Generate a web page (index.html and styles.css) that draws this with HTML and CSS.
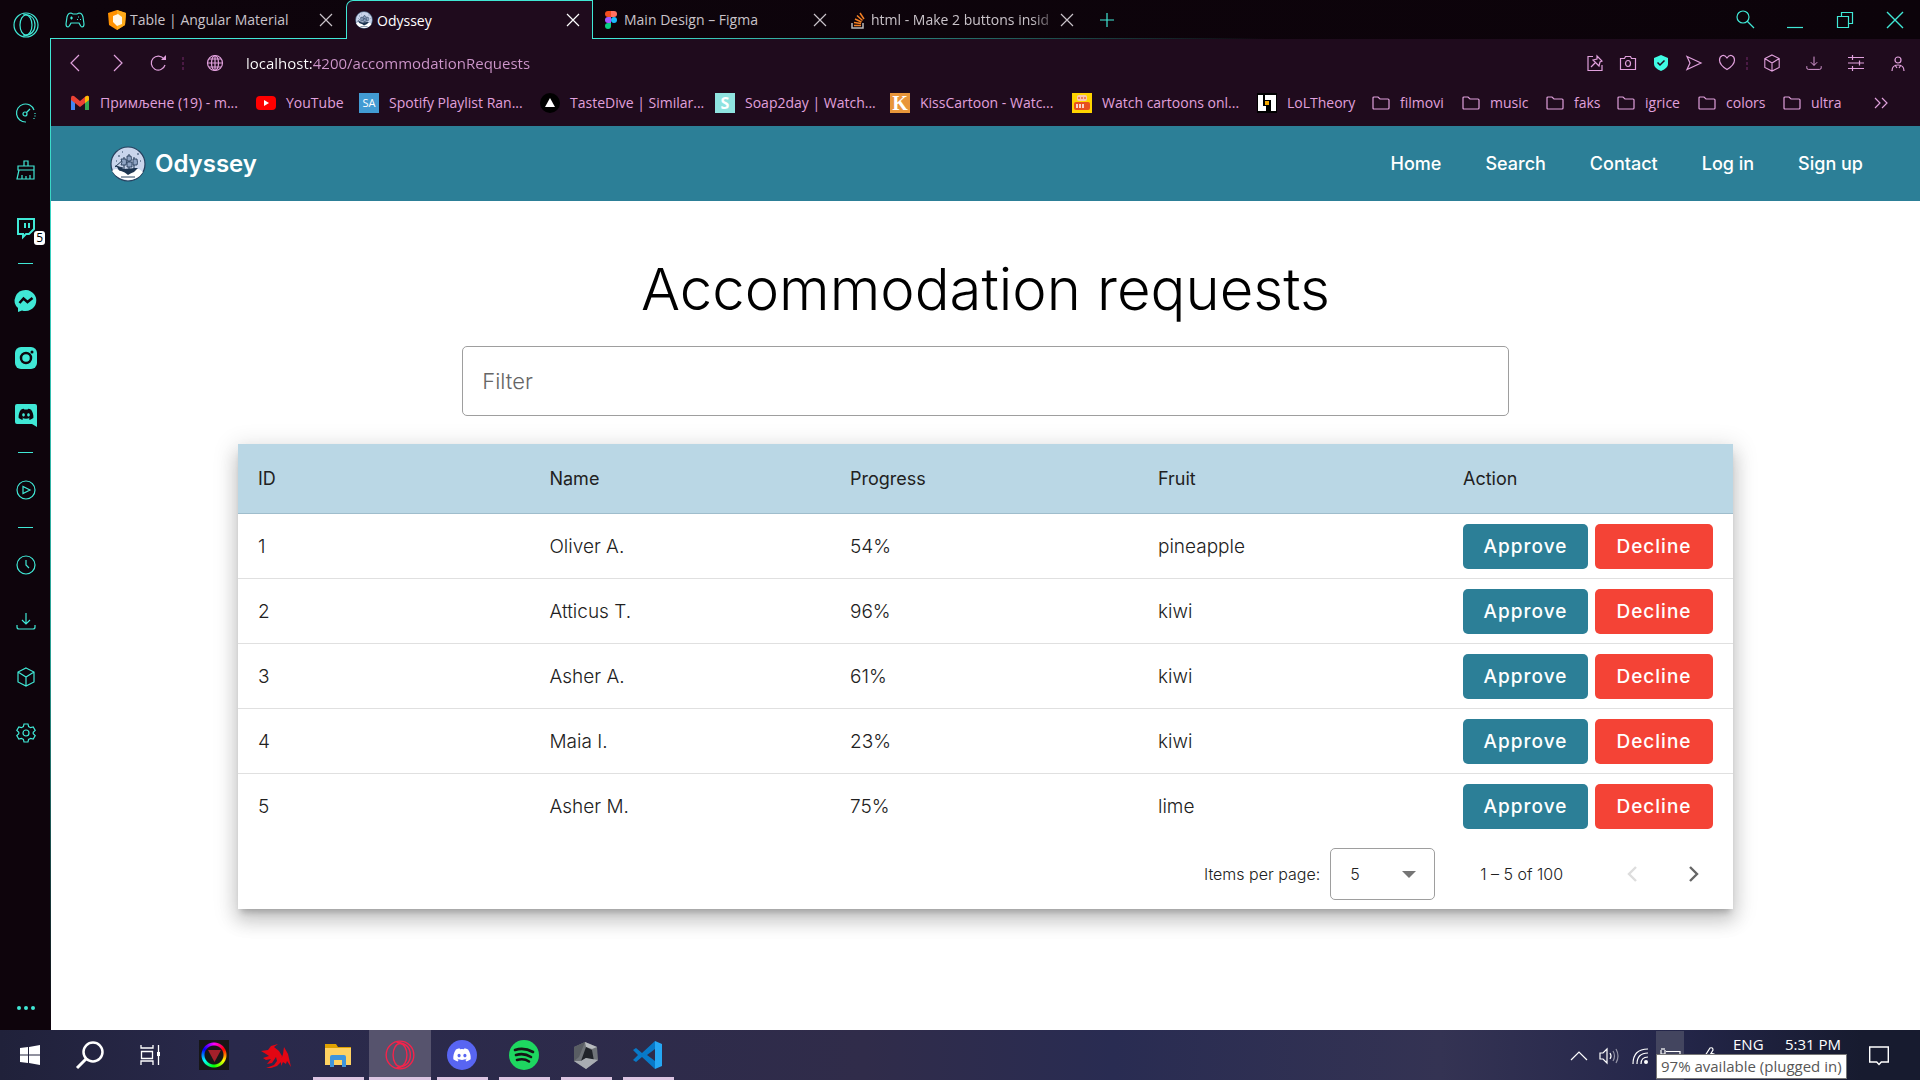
FILE: index.html
```html
<!DOCTYPE html>
<html lang="en">
<head>
<meta charset="utf-8">
<meta name="viewport" content="width=device-width, initial-scale=1">
<title>Odyssey</title>
<link rel="stylesheet" href="styles.css">
</head>
<body>
<svg class="defs" aria-hidden="true">
  <symbol id="close" viewBox="0 0 14 14"><path d="M1 1l12 12M13 1L1 13"/></symbol>
  <symbol id="folder" viewBox="0 0 18 14"><path d="M1 12V2q0-1 1-1h4l2 2h8q1 0 1 1v8q0 1-1 1H2q-1 0-1-1z"/></symbol>
  <symbol id="cube" viewBox="0 0 20 20"><path d="M10 1l8 4v10l-8 4-8-4V5zM2 5l8 5 8-5M10 10v9"/></symbol>
  <symbol id="download" viewBox="0 0 20 20"><path d="M10 2v11M6 9l4 4 4-4M1 14v2q0 2 2 2h14q2 0 2-2v-2"/></symbol>
  <symbol id="ship" viewBox="0 0 36 36">
    <circle cx="18" cy="18" r="17" fill="#c9d5ec" stroke="#26415f" stroke-width="1.2"/>
    <path d="M2 25q4-4 8 0 4-2 8 0 2-4 7-2 4-1 8 3-5 8-15 8-11-1-16-9z" fill="#fff" stroke="none"/>
    <path d="M7 20l7 3 11-1 3 0-4 4q-3 1-6 3-3-3-7-4-3 0-4-5z" fill="#1d3450" stroke="none"/>
    <path d="M14 23V11M19 23V8M24 23V11M5 21l9-8M5 20l8 2" fill="none" stroke="#1d3450" stroke-width="1"/>
    <path d="M11 13h5q1 3 0 6h-5q2-3 0-6zM17 10h4q1 3 0 5h-4zM17 16h5v5h-5zM23 13h4q1 4 0 6h-4z" fill="#8fa3c2" stroke="#1d3450" stroke-width=".8"/>
    <path d="M8 10h2M27 8h2M6 15h1M30 15h1M12 6h1M11 31h14" fill="none" stroke="#26415f" stroke-width="1"/>
  </symbol>
  <symbol id="opera" viewBox="0 0 26 26"><ellipse cx="13" cy="13" rx="12" ry="12"/><ellipse cx="13" cy="13" rx="6" ry="10"/><path d="M10 2q12 1 12 11T10 24"/></symbol>
  <symbol id="discord" viewBox="0 0 24 24"><path d="M19.3 5.3A17 17 0 0 0 15 4l-.6 1.1a15 15 0 0 0-4.8 0L9 4a17 17 0 0 0-4.300 1.300C2 9.300 1.300 13.200 1.600 17a17 17 0 0 0 5.200 2.700l1.200-1.900-1.800-.9.400-.3a12 12 0 0 0 10.800 0l.4.300-1.800.9 1.200 1.900a17 17 0 0 0 5.200-2.700c.4-4.400-.7-8.200-3.100-11.700zM8.500 14.800c-1 0-1.900-1-1.900-2.200s.8-2.200 1.900-2.200 1.900 1 1.900 2.200-.8 2.200-1.900 2.200zm7 0c-1 0-1.900-1-1.900-2.200s.8-2.200 1.900-2.200 1.900 1 1.900 2.200-.8 2.200-1.900 2.200z"/></symbol>
</svg>

<div class="window">
  <aside class="sidebar">
    <button class="side-logo" aria-label="Opera menu"><svg class="i26"><use href="#opera"/></svg></button>
    <div class="side-group">
      <button class="side-item" aria-label="GX Control"><svg class="i20" viewBox="0 0 20 20"><path d="M10 19A9 9 0 1 1 18 7M19 10v1M19 12.500v1M18 15v1"/><circle cx="9" cy="11" r="2"/><path d="M10.500 9.500L14 6"/></svg></button>
      <button class="side-item" aria-label="GX Cleaner"><svg class="i20" viewBox="0 0 20 20"><path d="M8 6V1h4v5M2 10V6h16v4zM3 10L1 19h17V10M6 19v-4M10 19v-3M14 19v-4"/></svg></button>
      <button class="side-item" aria-label="Twitch"><svg class="i20" viewBox="0 0 20 20"><path d="M2 2h16v10l-5 5h-3l-3 3v-3H2z" stroke-width="2"/><path d="M9 6v5M13 6v5" stroke-width="2"/></svg><span class="badge">5</span></button>
    </div>
    <hr class="side-sep">
    <div class="side-group">
      <button class="side-item" aria-label="Messenger"><svg class="i24" viewBox="0 0 24 24"><path class="solid" d="M12 1a11 10.500 0 1 1-4 20.500L4 23v-4A11 10.500 0 0 1 12 1z"/><path class="cut" d="M5.500 14l4-4.500 4 3.500 5-4"/></svg></button>
      <button class="side-item" aria-label="Instagram"><svg class="i24" viewBox="0 0 24 24"><rect class="solid" x="1" y="1" width="22" height="22" rx="6"/><circle class="cut" cx="12" cy="12" r="5"/><circle class="dark" cx="18" cy="6" r="1.500"/></svg></button>
      <button class="side-item" aria-label="Discord"><svg class="i24" viewBox="0 0 24 24"><path class="solid" d="M3 1h18q2 0 2 2v21l-5-3H3q-2 0-2-2V3q0-2 2-2z"/><svg class="dark" x="3" y="3" width="18" height="17"><use href="#discord"/></svg></svg></button>
    </div>
    <hr class="side-sep wide">
    <button class="side-item tight" aria-label="Player"><svg class="i20" viewBox="0 0 20 20"><circle cx="10" cy="10" r="9"/><path d="M7 6.500v7l7-3.500z"/></svg></button>
    <hr class="side-sep wide">
    <div class="side-group">
      <button class="side-item tight" aria-label="History"><svg class="i20" viewBox="0 0 20 20"><circle cx="10" cy="10" r="9"/><path d="M10 5v5l3 3"/></svg></button>
      <button class="side-item tight" aria-label="Downloads"><svg class="i20"><use href="#download"/></svg></button>
      <button class="side-item tight" aria-label="Extensions"><svg class="i20"><use href="#cube"/></svg></button>
      <button class="side-item tight" aria-label="Settings"><svg class="i20" viewBox="0 0 20 20"><circle cx="10" cy="10" r="3"/><path d="M8 1h4l.6 2.600 2 1.100L17.200 4l2 3.400-2 1.900v1.400l2 1.900-2 3.400-2.600-.7-2 1.100L12 19H8l-.6-2.600-2-1.100-2.600.7-2-3.400 2-1.900V9.300l-2-1.900L2.800 4l2.600.7 2-1.100z"/></svg></button>
    </div>
    <button class="side-more" aria-label="More"><svg class="i20" viewBox="0 0 20 20"><g class="solid"><circle cx="3" cy="10" r="2"/><circle cx="10" cy="10" r="2"/><circle cx="17" cy="10" r="2"/></g></svg></button>
  </aside>

  <div class="browser">
    <div class="tabbar">
      <button class="corner" aria-label="GX Corner"><svg class="i20" viewBox="0 0 20 20"><path d="M6 3q-3 0-4 4L1 14q0 3 2 3 1 0 3-4h8q2 4 3 4 2 0 2-3l-1-7q-1-4-4-4l-2 1H8z"/><path d="M5 8h3M6.500 6.500v3M13 7h1M12 9.500h1M15 9.500h1"/></svg></button>
      <div class="tab">
        <svg class="fav" viewBox="0 0 18 20"><path d="M9 0l9 3-1 12-8 5-8-5L0 3z" fill="#ff9100"/><path d="M9 0l9 3-1 12-8 5z" fill="#ffab1a"/><path d="M5 6l5-2 4 3v7l-5 2-4-4z" fill="#fff7e8"/></svg>
        <span class="tab-title">Table | Angular Material</span>
        <button class="tab-close" aria-label="Close tab"><svg class="i14"><use href="#close"/></svg></button>
      </div>
      <div class="tab active">
        <svg class="fav"><use href="#ship"/></svg>
        <span class="tab-title">Odyssey</span>
        <button class="tab-close" aria-label="Close tab"><svg class="i14"><use href="#close"/></svg></button>
      </div>
      <div class="tab">
        <svg class="fav" viewBox="0 0 18 20"><path d="M9 1H6a3 3 0 0 0 0 6h3z" fill="#f24e1e"/><path d="M9 1h3a3 3 0 0 1 0 6H9z" fill="#ff7262"/><path d="M9 7H6a3 3 0 0 0 0 6h3z" fill="#a259ff"/><circle cx="12" cy="10" r="3" fill="#1abcfe"/><path d="M9 13H6a3 3 0 1 0 3 3z" fill="#0acf83"/></svg>
        <span class="tab-title">Main Design – Figma</span>
        <button class="tab-close" aria-label="Close tab"><svg class="i14"><use href="#close"/></svg></button>
      </div>
      <div class="tab">
        <svg class="fav" viewBox="0 0 18 20"><path d="M3 13v5h11v-5" fill="none" stroke="#bcbbbb" stroke-width="1.500"/><path d="M5 15.500h7M5 12.500l7 1M6 9l6.500 3M8 5.500l5.500 5M11 3l4 6" stroke="#f48024" stroke-width="1.500"/></svg>
        <span class="tab-title fade">html - Make 2 buttons insid</span>
        <button class="tab-close" aria-label="Close tab"><svg class="i14"><use href="#close"/></svg></button>
      </div>
      <button class="new-tab" aria-label="New tab"><svg class="i16" viewBox="0 0 16 16"><path d="M8 1v14M1 8h14"/></svg></button>
      <div class="controls">
        <button aria-label="Search tabs"><svg class="i20" viewBox="0 0 20 20"><circle cx="8" cy="7" r="6"/><path d="M12 11l7 7"/></svg></button>
        <button aria-label="Minimize"><svg class="i16" viewBox="0 0 16 16"><path d="M0 15.500h16"/></svg></button>
        <button aria-label="Restore"><svg class="i16" viewBox="0 0 16 16"><path d="M.5 4.500h11v11H.5zM4.500 4.500v-4h11v11h-4"/></svg></button>
        <button aria-label="Close window"><svg class="i16" viewBox="0 0 14 14"><path d="M0 0l14 14M14 0L0 14"/></svg></button>
      </div>
    </div>

    <div class="addressbar">
      <div class="nav-buttons">
        <button aria-label="Back"><svg class="i16" viewBox="0 0 16 16"><path d="M11 0L3 8l8 8"/></svg></button>
        <button aria-label="Forward"><svg class="i16" viewBox="0 0 16 16"><path d="M5 0l8 8-8 8"/></svg></button>
        <button aria-label="Reload"><svg class="i16" viewBox="0 0 16 16"><path d="M15 10a7 7 0 1 1-1-6"/><path class="solid" d="M11 5h5V0z"/></svg></button>
      </div>
      <span class="grip"></span>
      <button class="site" aria-label="Site information"><svg class="i16" viewBox="0 0 16 16"><circle cx="8" cy="8" r="7.500"/><ellipse cx="8" cy="8" rx="3.500" ry="7.500"/><path d="M8 0v16M0 8h16M2 4h12M2 12h12"/></svg></button>
      <input class="url" type="text" aria-label="Address" value="localhost:4200/accommodationRequests">
      <div class="page-tools">
        <button aria-label="Pin page"><svg class="i16" viewBox="0 0 16 16"><path d="M6 1.500H1v14h14V10M10 1l5 5-2 1-1 4-6-6 4-1zM8 8l-4 4"/></svg></button>
        <button aria-label="Snapshot"><svg class="i16" viewBox="0 0 16 16"><path d="M.5 3.500h4l1-2h5l1 2h4v11H.5z"/><ellipse cx="8" cy="8.500" rx="2.500" ry="3"/></svg></button>
        <button aria-label="Ad blocker"><svg class="i16" viewBox="0 0 16 16"><path d="M8 0l7 3v6q0 4-7 7-7-3-7-7V3z" fill="#40fbe4"/><path d="M4.500 7.500L7 10l4.500-4.500" stroke="#1f0b1d" stroke-width="1.500"/></svg></button>
        <button aria-label="Flow"><svg class="i16" viewBox="0 0 16 16"><path d="M1 1.500L15 8 1 14.500 4 8z"/></svg></button>
        <button aria-label="Bookmark"><svg class="i16" viewBox="0 0 16 16"><path d="M8 3Q6 0 3.500 .5 .5 1.500.5 5q0 5 7.500 9.500Q15.500 10 15.500 5q0-3.500-3-4.500Q10 0 8 3z"/></svg></button>
      </div>
      <span class="grip"></span>
      <div class="browser-tools">
        <button aria-label="Extensions"><svg class="i18"><use href="#cube"/></svg></button>
        <button aria-label="Downloads"><svg class="i16"><use href="#download"/></svg></button>
        <button aria-label="Easy setup"><svg class="i16" viewBox="0 0 16 16"><path d="M0 2.500h16M0 8h16M0 13.500h16M4.500 0v5M11.500 5.500v5M4.500 11v5"/></svg></button>
        <button aria-label="Profile"><svg class="i16" viewBox="0 0 16 16"><circle cx="8" cy="5" r="3"/><path d="M2 16q0-6 6-6t6 6M5 10l2 3M11 10l-2 3"/></svg></button>
      </div>
    </div>

    <nav class="bookmarks" aria-label="Bookmarks">
      <a href="#"><svg class="bm" viewBox="0 0 20 20"><path d="M1 17V5l4 3v9z" fill="#4285f4"/><path d="M19 17V5l-4 3v9z" fill="#34a853"/><path d="M1 5q0-3 3-2l6 5 6-5q3-1 3 2v2l-9 7-9-7z" fill="#ea4335"/><path d="M15 4q4-3 4 1v2l-4 3z" fill="#fbbc04"/></svg>Примљене (19) - m...</a>
      <a href="#"><svg class="bm" viewBox="0 0 20 20"><rect y="3" width="20" height="14" rx="4" fill="#f00"/><path d="M8 7v6l5-3z" fill="#fff"/></svg>YouTube</a>
      <a href="#"><span class="tile blue">SA</span>Spotify Playlist Ran...</a>
      <a href="#"><svg class="bm" viewBox="0 0 20 20"><circle cx="10" cy="10" r="10" fill="#000"/><path d="M5 14l5-9 5 9z" fill="#fff"/></svg>TasteDive | Similar...</a>
      <a href="#"><span class="tile mint">S</span>Soap2day | Watch...</a>
      <a href="#"><span class="tile orange">K</span>KissCartoon - Watc...</a>
      <a href="#"><svg class="bm" viewBox="0 0 20 20"><rect width="20" height="20" fill="#ffd400"/><rect x="5" y="2" width="10" height="6" rx="2" fill="#f6c9b4"/><path d="M7 4v2M10 4v2M13 4v2" stroke="#e8501e"/><rect x="2" y="9" width="16" height="8" rx="2" fill="#e8501e"/><path d="M5 11v4M8 11v4M11 11v4" stroke="#fff" stroke-width="1.500"/></svg>Watch cartoons onl...</a>
      <a href="#"><svg class="bm" viewBox="0 0 20 20"><rect width="20" height="20" fill="#000"/><path d="M1 2h5v11h3v5H1zM8 2h11v16h-5V7H8z" fill="#fff"/><rect x="8" y="8" width="4" height="4" fill="#f5a800"/></svg>LoLTheory</a>
      <a href="#"><svg class="bm-folder"><use href="#folder"/></svg>filmovi</a>
      <a href="#"><svg class="bm-folder"><use href="#folder"/></svg>music</a>
      <a href="#"><svg class="bm-folder"><use href="#folder"/></svg>faks</a>
      <a href="#"><svg class="bm-folder"><use href="#folder"/></svg>igrice</a>
      <a href="#"><svg class="bm-folder"><use href="#folder"/></svg>colors</a>
      <a href="#"><svg class="bm-folder"><use href="#folder"/></svg>ultra</a>
      <button aria-label="More bookmarks"><svg class="i14" viewBox="0 0 14 14"><path d="M1 2l5 5-5 5M8 2l5 5-5 5"/></svg></button>
    </nav>

    <header class="site-header">
      <a class="brand" href="#"><svg class="brand-mark"><use href="#ship"/></svg>Odyssey</a>
      <nav class="site-nav">
        <a href="#">Home</a>
        <a href="#">Search</a>
        <a href="#">Contact</a>
        <a href="#">Log in</a>
        <a href="#">Sign up</a>
      </nav>
    </header>

    <main class="content">
      <h1>Accommodation requests</h1>
      <input class="filter" type="text" placeholder="Filter" aria-label="Filter">
      <section class="card">
        <table>
          <colgroup><col class="c-id"><col class="c-name"><col class="c-progress"><col class="c-fruit"><col class="c-action"></colgroup>
          <thead><tr><th>ID</th><th>Name</th><th>Progress</th><th>Fruit</th><th>Action</th></tr></thead>
          <tbody>
            <tr><td>1</td><td>Oliver A.</td><td>54%</td><td>pineapple</td><td><div class="actions"><button class="btn approve">Approve</button><button class="btn decline">Decline</button></div></td></tr>
            <tr><td>2</td><td>Atticus T.</td><td>96%</td><td>kiwi</td><td><div class="actions"><button class="btn approve">Approve</button><button class="btn decline">Decline</button></div></td></tr>
            <tr><td>3</td><td>Asher A.</td><td>61%</td><td>kiwi</td><td><div class="actions"><button class="btn approve">Approve</button><button class="btn decline">Decline</button></div></td></tr>
            <tr><td>4</td><td>Maia I.</td><td>23%</td><td>kiwi</td><td><div class="actions"><button class="btn approve">Approve</button><button class="btn decline">Decline</button></div></td></tr>
            <tr><td>5</td><td>Asher M.</td><td>75%</td><td>lime</td><td><div class="actions"><button class="btn approve">Approve</button><button class="btn decline">Decline</button></div></td></tr>
          </tbody>
        </table>
        <div class="paginator">
          <label for="page-size">Items per page:</label>
          <div class="select"><select id="page-size"><option>5</option><option>10</option><option>20</option></select></div>
          <span class="range">1 – 5 of 100</span>
          <button class="page" aria-label="Previous page" disabled><svg class="i16" viewBox="0 0 16 16"><path d="M11 1L4 8l7 7"/></svg></button>
          <button class="page" aria-label="Next page"><svg class="i16" viewBox="0 0 16 16"><path d="M5 1l7 7-7 7"/></svg></button>
        </div>
      </section>
    </main>
  </div>
</div>

<footer class="taskbar">
  <div class="system">
    <button aria-label="Start"><svg class="i20" viewBox="0 0 20 20"><path class="solid" d="M0 3l8-1v7.500H0zM9 2l11-2v9.500H9zM0 10.500h8V18l-8-1zM9 10.500h11V20L9 18z"/></svg></button>
    <button aria-label="Search"><svg class="i28" viewBox="0 0 28 28"><circle cx="17" cy="11" r="9.500" stroke-width="2.500"/><path d="M10 18l-9 9" stroke-width="3"/></svg></button>
    <button aria-label="Task view"><svg class="i20" viewBox="0 0 20 20"><path d="M1 0v3h12V0M1 20v-4h12v4M1.500 6.500h11v7h-11zM18.500 0v20" stroke-width="1.300"/><path class="solid" d="M17 7h3v4h-3z"/></svg></button>
  </div>
  <div class="apps">
    <button class="app" aria-label="RGB control"><span class="rgb"><svg viewBox="0 0 12 12"><path d="M0 1h12L6 12z" fill="#a3202a"/></svg></span></button>
    <button class="app" aria-label="Redragon"><svg class="i30" viewBox="0 0 30 30"><path d="M0 11l7-1 3-4 7-2-4 3 5 4 3 5-1 6-4 4-6 2H5l8-3 3-4-1-4-4 6-5 1 4-5-5 1-3-2 6-2-3-2zM20 20l2-6 1-7 4 7 3 13-4-6-1 3-3-2-2 4z" fill="#e30613"/></svg></button>
    <button class="app open" aria-label="File Explorer"><svg class="i28" viewBox="0 0 28 28"><path d="M1 3h11l2 3h13v4H1z" fill="#dfa100"/><path d="M1 7h26v17H1z" fill="#ffd262"/><path d="M6 26V16q0-2 2-2h12q2 0 2 2v10h-4v-7h-8v7z" fill="#3f95dc"/></svg></button>
    <button class="app open current" aria-label="Opera GX"><svg class="i30 red"><use href="#opera"/></svg></button>
    <button class="app open" aria-label="Discord"><span class="round indigo"><svg class="i20"><use href="#discord"/></svg></span></button>
    <button class="app open" aria-label="Spotify"><span class="round green"><svg class="i20" viewBox="0 0 20 20"><path d="M1 5q9-3 18 2M2 10q8-2.500 15 2M3 15q7-2 12 1.500" stroke="#151515" stroke-width="2.600" stroke-linecap="round"/></svg></span></button>
    <button class="app open" aria-label="Hardware suite"><svg class="i28" viewBox="0 0 28 28"><path d="M13 1l12 5 1 13-12 9L2 20V6z" fill="#6f7378"/><path d="M13 1l12 5-5 2-6-2z" fill="#b9bcc0"/><path d="M14 6l6 3 2 11-8-3-5 3z" fill="#202329"/><path d="M2 20l7 0 5-3 12 2-12 9z" fill="#a9adb2"/><path d="M2 6l11-5-6 15-5 4z" fill="#595d63"/></svg></button>
    <button class="app open" aria-label="Visual Studio Code"><svg class="i30" viewBox="0 0 30 30"><path d="M22 1L9 13 3 8 0 10l5 5-5 5 3 2 6-5 13 12V21l-8-6 8-6z" fill="#0879c8"/><path d="M22 1l7 3v22l-7 3z" fill="#25a7f4"/></svg></button>
  </div>
  <div class="tray">
    <button class="t-chevron" aria-label="Show hidden icons"><svg class="i16" viewBox="0 0 16 16"><path d="M0 12l8-8 8 8"/></svg></button>
    <button aria-label="Volume"><svg class="i20" viewBox="0 0 20 20"><path d="M0 7h3l4-4v14l-4-4H0zM10 7q2 3 0 6"/><path opacity=".5" d="M13 5q3 5 0 10M16 3q4 7 0 14"/></svg></button>
    <button aria-label="Network"><svg class="i16" viewBox="0 0 16 16"><path d="M1 16Q1 1 16 1M5 16Q5 5 16 5M9 16q0-7 7-7"/><circle class="solid" cx="14" cy="14" r="2"/></svg></button>
    <button class="hover" aria-label="Battery"><svg class="i20" viewBox="0 0 20 20"><path d="M6 5.500h14v9H4V9M1 4v4h4V4M2 4V2M4 4V2M3 8v4"/><path class="solid" d="M7 8h11v5H7z"/></svg></button>
    <button class="t-pen" aria-label="Ink workspace"><svg class="i16" viewBox="0 0 16 16"><path d="M2 11l7-11q3-1 3 2L6 12zM7 11q3-7 6-5t0 6"/></svg></button>
    <span class="lang">ENG</span>
    <time>5:31 PM</time>
    <button class="notify" aria-label="Notifications"><svg class="i20" viewBox="0 0 20 20"><path d="M.7 1h18.600v15h-7L10 18.500 7.700 16h-7z" stroke-width="1.400"/></svg></button>
    <span class="tooltip" role="tooltip">97% available (plugged in)</span>
  </div>
</footer>
</body>
</html>
```

FILE: styles.css
```css
:root {
  --neon: #40e8d6;
  --pink: #e0a0dc;
  --chrome: #1f0b1d;
  --night: #0e040c;
  --teal: #2c7f97;
  --red: #f44336;
}

* { box-sizing: border-box; }

body {
  margin: 0;
  min-height: 100vh;
  display: flex;
  flex-direction: column;
  background: #fff;
  font-family: "Open Sans", "Noto Sans", sans-serif;
  font-size: 14px;
}

button {
  padding: 0;
  border: 0;
  background: none;
  color: inherit;
  font: inherit;
  display: flex;
  align-items: center;
  justify-content: center;
}

a { color: inherit; text-decoration: none; }

svg { flex: none; fill: none; stroke: currentColor; stroke-width: 1.2; overflow: visible; }
svg [fill]:not([stroke]), .solid { stroke: none; }
.solid { fill: currentColor; }
.cut { stroke: var(--night); stroke-width: 2.5; }
.dark { fill: var(--night); stroke: none; }
.defs { position: absolute; width: 0; height: 0; }

.i14 { width: 14px; height: 14px; }
.i16 { width: 16px; height: 16px; }
.i18 { width: 18px; height: 18px; }
.i20 { width: 20px; height: 20px; }
.i24 { width: 24px; height: 24px; }
.i26 { width: 26px; height: 26px; }
.i28 { width: 28px; height: 28px; }
.i30 { width: 30px; height: 30px; }

.window { flex: 1; display: flex; }

/* Sidebar */
.sidebar {
  width: 51px;
  flex: none;
  display: flex;
  flex-direction: column;
  color: var(--neon);
  background:
    linear-gradient(var(--neon), #2a9d92 60%, transparent 96%) right 38px / 1px 100% no-repeat,
    var(--night);
}
.side-logo { height: 50px; margin-bottom: 34px; }
.side-item { position: relative; width: 100%; height: 57px; }
.side-item.tight { height: 56px; }
.side-sep { width: 15px; height: 1px; margin: 8px auto; border: 0; background: var(--neon); }
.side-sep.wide { margin: 9px auto; }
.side-more { height: 44px; margin-top: auto; }
.badge {
  position: absolute;
  right: 6px;
  bottom: 10px;
  padding: 0 2px;
  border-radius: 3px;
  background: #fff;
  color: #000;
  font-size: 12px;
  line-height: 14px;
}

.browser { flex: 1; min-width: 0; display: flex; flex-direction: column; }

/* Tab strip */
.tabbar {
  height: 39px;
  display: flex;
  color: var(--neon);
  background:
    linear-gradient(90deg, var(--neon) 0 30%, transparent 65%) bottom / 100% 1px no-repeat,
    linear-gradient(90deg, var(--night), #0c030a);
}
.corner { width: 48px; }
.tab {
  width: 247px;
  display: flex;
  align-items: center;
  padding: 0 13px 0 9px;
  color: #c9c3c9;
}
.tab.active {
  padding: 0 12px 0 8px;
  border: 1px solid var(--neon);
  border-bottom: 0;
  border-top-left-radius: 7px;
  background: var(--chrome);
  color: #fff;
}
.fav { width: 18px; height: 20px; margin-right: 4px; }
.tab-title { flex: 1; white-space: nowrap; }
.fade { mask-image: linear-gradient(90deg, #000 85%, transparent); }
.new-tab { width: 40px; }
.controls { margin-left: auto; display: flex; }
.controls button { width: 50px; }

/* Address bar */
.addressbar { height: 48px; display: flex; align-items: center; background: var(--chrome); color: var(--pink); }
.nav-buttons { display: flex; padding-left: 4px; }
.nav-buttons button { width: 41px; }
.grip { width: 2px; height: 13px; margin: 0 4px; background: repeating-linear-gradient(#4a1a44 0 3px, transparent 3px 5px); }
.site { width: 54px; margin-right: 4px; }
.url {
  flex: 1;
  min-width: 0;
  padding: 0;
  border: 0;
  outline: 0;
  font: inherit;
  font-size: 15px;
  color: var(--pink);
  background: linear-gradient(90deg, #fff 67px, #cf97cc 67px);
  background-clip: text;
  -webkit-text-fill-color: transparent;
}
.page-tools { display: flex; }
.page-tools button { width: 33px; }
.page-tools + .grip { margin: 0 3px; }
.browser-tools { display: flex; padding-right: 1px; }
.browser-tools button { width: 42px; }

/* Bookmarks bar */
.bookmarks {
  height: 39px;
  padding: 0 0 8px 19px;
  display: grid;
  grid-template-columns: 186px 103px 181px 175px 175px 182px 185px 115px 90px 84px 71px 81px 85px 80px 36px;
  align-items: center;
  background: var(--chrome);
  color: var(--pink);
}
.bookmarks a { display: flex; align-items: center; gap: 10px; white-space: nowrap; }
.bm { width: 20px; height: 20px; }
.bm-folder { width: 18px; height: 14px; }
.tile { width: 20px; height: 20px; display: grid; place-items: center; color: #fff; font-size: 11px; line-height: 20px; }
.blue { background: #429bd3; }
.mint { background: #8fe3e0; font-size: 16px; font-weight: 700; }
.orange { background: #e8963a; font: 700 20px/20px "Liberation Serif", serif; }

/* Site header */
.site-header {
  min-height: 75px;
  padding: 0 57px 0 59px;
  display: flex;
  align-items: center;
  justify-content: space-between;
  background: var(--teal);
  color: #fff;
  font-family: Inter, sans-serif;
}
.brand { display: flex; align-items: center; gap: 9px; font-size: 24px; font-weight: 600; }
.brand-mark { width: 36px; height: 36px; }
.site-nav { display: flex; gap: 44px; font-size: 18px; font-weight: 500; }

/* Requests page */
.content {
  flex: 1;
  display: flex;
  flex-direction: column;
  align-items: center;
  padding-top: 56px;
  font-family: Inter, sans-serif;
  color: #212121;
}
h1 { margin: 0 0 25px; font-size: 58px; line-height: 64px; font-weight: 300; color: #000; }
.filter {
  width: 56%;
  height: 70px;
  margin-bottom: 28px;
  padding: 0 19px;
  border: 1px solid #9e9e9e;
  border-radius: 5px;
  background: #fff;
  font: 300 22px Inter, sans-serif;
}
.filter::placeholder { color: #666; opacity: 1; }
.card {
  width: 80%;
  background: #fff;
  box-shadow: 0 6px 6px -3px #0003, 0 12px 17px 1px #00000024, 0 5px 22px 4px #0000001f;
}
table { width: 100%; table-layout: fixed; border-collapse: separate; border-spacing: 0; font-size: 19px; }
.c-id { width: 19.5%; }
.c-name { width: 20.1%; }
.c-progress { width: 20.6%; }
.c-fruit { width: 20.4%; }
.c-action { width: 19.4%; }
th, td { padding: 0 0 0 20px; text-align: left; border-bottom: 1px solid #0000001f; }
th { height: 70px; background: #bad7e5; font-size: 18px; font-weight: 400; border-bottom-color: #9fbdcc; }
td { height: 65px; font-weight: 300; }
tbody tr:last-child td { border-bottom: 0; }
.actions { display: flex; gap: 7px; }
.btn { height: 45px; border-radius: 5px; color: #fff; font-size: 19px; font-weight: 500; letter-spacing: 1px; }
.approve { width: 125px; background: var(--teal); }
.decline { width: 118px; background: var(--red); }

.paginator {
  min-height: 70px;
  display: flex;
  align-items: center;
  justify-content: flex-end;
  padding-right: 10px;
  font-size: 16px;
  font-weight: 300;
}
.select { position: relative; margin: 0 45px 0 10px; }
.select::after {
  content: "";
  position: absolute;
  right: 19px;
  top: 23px;
  border: 7px solid transparent;
  border-top-color: #757575;
  border-bottom: 0;
}
select {
  appearance: none;
  width: 105px;
  height: 52px;
  padding: 0 19px;
  border: 1px solid #9e9e9e;
  border-radius: 5px;
  background: #fff;
  color: inherit;
  font: inherit;
}
.range { margin-right: 40px; }
.page { width: 60px; height: 60px; color: #666; }
.page svg { stroke-width: 2.4; }
.page:disabled { color: #ddd; }

/* Taskbar */
.taskbar {
  height: 50px;
  display: flex;
  color: #fff;
  background: linear-gradient(90deg, #20213a, #29294b 12%, #302c4a 45%, #292c52 58%, #343353 75%, #24264a 87%, #171b2f 97%);
}
.system { display: flex; margin-right: 3px; }
.system button { width: 60px; }
.apps { display: flex; }
.app { width: 62px; }
.open { background: linear-gradient(#dcc5e2, #dcc5e2) bottom / 51px 3px no-repeat; }
.current { background: linear-gradient(#dcc5e2, #dcc5e2) bottom / 100% 3px no-repeat, #56536d; }
.red { color: #f5234b; }
.rgb {
  width: 30px;
  height: 30px;
  display: grid;
  place-items: center;
  background:
    radial-gradient(circle, #161616 0 9px, transparent 10px 12px, #161616 13px),
    conic-gradient(#f0f, red, #ff0, lime, cyan, blue, #f0f);
}
.rgb svg { width: 13px; height: 13px; }
.round { width: 30px; height: 30px; border-radius: 50%; display: grid; place-items: center; }
.indigo { background: #5865f2; }
.indigo svg { fill: #fff; stroke: none; }
.green { background: #1ed760; }
.tray { position: relative; margin-left: auto; display: flex; }
.tray button { width: 28px; margin: 1px 1px 0; }
.tray .t-chevron { width: 30px; }
.tray .hover { background: #43455f; }
.tray .t-pen { width: 46px; }
.lang, time { padding: 3px 0 0; line-height: 22px; font-size: 15px; }
.lang { width: 52px; }
time { width: 60px; }
.tray .notify { width: 66px; margin-right: 8px; }
.tooltip {
  position: absolute;
  right: 73px;
  bottom: 1px;
  width: 191px;
  padding: 0 4px;
  border: 1px solid #767676;
  background: #fff;
  color: #575757;
  font-size: 15px;
  line-height: 23px;
  white-space: nowrap;
}
```
